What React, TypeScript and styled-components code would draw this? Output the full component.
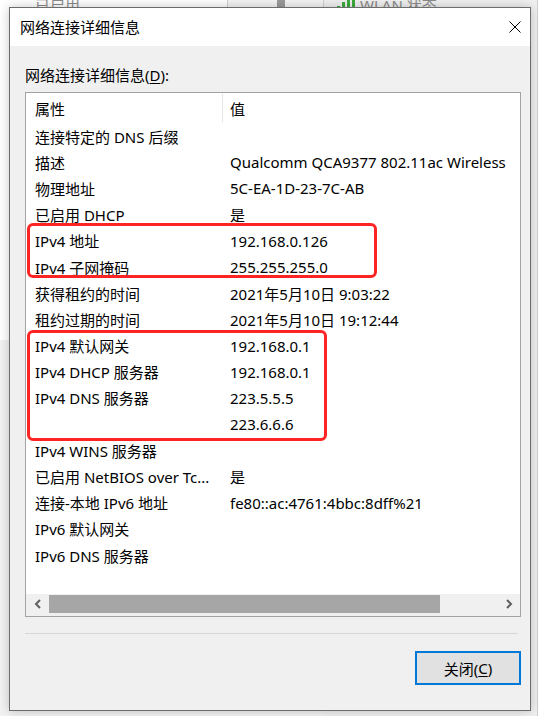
import React from "react";
import styled, { createGlobalStyle } from "styled-components";

const Global = createGlobalStyle`
  html, body { margin: 0; padding: 0; }
  body {
    width: 538px;
    height: 716px;
    overflow: hidden;
    background: #f2f2f2;
    font-family: "Noto Sans", "Noto Sans CJK SC", sans-serif;
    font-size: 15px;
    color: #000;
  }
  * { box-sizing: border-box; }
`;

const Desktop = styled.div`
  position: relative;
  width: 538px;
  height: 716px;
  padding: 7px 0 0 9px;
  overflow: hidden;
`;

/* background windows peeking out behind the dialog */
const BackWindow = styled.div<{ $left: number; $top: number; $w: number; $h: number; $bg: string }>`
  position: absolute;
  left: ${(p) => p.$left}px;
  top: ${(p) => p.$top}px;
  width: ${(p) => p.$w}px;
  height: ${(p) => p.$h}px;
  background: ${(p) => p.$bg};
  border-right: 1px solid #d0d0d0;
`;

const BackText = styled.span<{ $left: number; $top: number }>`
  position: absolute;
  left: ${(p) => p.$left}px;
  top: ${(p) => p.$top}px;
  color: #8a8a8a;
  font-size: 15px;
  line-height: 20px;
  white-space: nowrap;
`;

const BackBar = styled.div<{ $left: number; $w: number; $c: string }>`
  position: absolute;
  left: ${(p) => p.$left}px;
  top: 0;
  width: ${(p) => p.$w}px;
  height: 100%;
  background: ${(p) => p.$c};
`;

const Dialog = styled.div`
  position: relative;
  width: 522px;
  height: 704px;
  border: 1px solid #6c6c6c;
  background: #f0f0f0;
  box-shadow: 0 0 10px rgba(0, 0, 0, 0.22);
  display: flex;
  flex-direction: column;
`;

const TitleBar = styled.div`
  height: 38px;
  background: #fff;
  display: flex;
  align-items: center;
  justify-content: space-between;
  padding: 0 9px 0 10px;
  flex-shrink: 0;
`;

const Title = styled.span`
  font-size: 15px;
  line-height: 20px;
  color: #000;
`;

const CloseBtn = styled.div`
  width: 12px;
  height: 12px;
  display: flex;
`;

const Body = styled.div`
  flex: 1;
  display: flex;
  flex-direction: column;
  padding: 19px 9px 0 15px;
`;

const Label = styled.div`
  line-height: 20px;
  height: 20px;
  color: #000;
`;

const U = styled.span`
  text-decoration: underline;
  text-underline-offset: 2px;
`;

const ListBox = styled.div`
  position: relative;
  margin-top: 7px;
  height: 525px;
  border: 1px solid #a3a3a3;
  background: #fff;
  display: flex;
  flex-direction: column;
`;

const Header = styled.div`
  height: 30px;
  display: grid;
  grid-template-columns: 196px 1fr;
  flex-shrink: 0;
`;

const HeadCell = styled.div<{ $sep?: boolean }>`
  display: flex;
  align-items: center;
  padding-left: ${(p) => (p.$sep ? 7 : 9)}px;
  border-left: ${(p) => (p.$sep ? "1px solid #e5e5e5" : "none")};
  margin: 1px 0 1px;
`;

const Rows = styled.div`
  flex: 1;
  overflow: hidden;
  display: flex;
  flex-direction: column;
`;

const Row = styled.div`
  height: 26.2px;
  flex-shrink: 0;
  display: grid;
  grid-template-columns: 196px 1fr;
  align-items: center;
  white-space: nowrap;
`;

const Prop = styled.div`
  padding-left: 9px;
  overflow: hidden;
`;

const Val = styled.div`
  padding-left: 8px;
  overflow: hidden;
`;

const HScroll = styled.div`
  height: 22px;
  flex-shrink: 0;
  background: #f0f0f0;
  display: flex;
  align-items: flex-start;
  padding-top: 1px;
`;

const Arrow = styled.div`
  width: 23px;
  height: 18px;
  display: flex;
  align-items: center;
  justify-content: center;
  flex-shrink: 0;
`;

const Track = styled.div`
  flex: 1;
  height: 18px;
  display: flex;
`;

const Thumb = styled.div`
  height: 18px;
  background: #a6a6a6;
`;

const Mark = styled.div<{ $l: number; $t: number; $w: number; $h: number }>`
  position: absolute;
  left: ${(p) => p.$l}px;
  top: ${(p) => p.$t}px;
  width: ${(p) => p.$w}px;
  height: ${(p) => p.$h}px;
  border: 3px solid #ff2424;
  border-radius: 6px;
  pointer-events: none;
`;

const Separator = styled.div`
  margin-top: 16px;
  height: 1px;
  margin-right: 3px;
  background: #d6d6d6;
`;

const Button = styled.button`
  margin-top: 17px;
  align-self: flex-end;
  width: 106px;
  height: 34px;
  border: 2px solid #0078d7;
  background: #e1e1e1;
  font-family: "Noto Sans", "Noto Sans CJK SC", sans-serif;
  font-size: 15px;
  color: #000;
  padding: 0;
  display: flex;
  align-items: center;
  justify-content: center;
  cursor: default;
`;

const rows: [string, string][] = [
  ["连接特定的 DNS 后缀", ""],
  ["描述", "Qualcomm QCA9377 802.11ac Wireless"],
  ["物理地址", "5C-EA-1D-23-7C-AB"],
  ["已启用 DHCP", "是"],
  ["IPv4 地址", "192.168.0.126"],
  ["IPv4 子网掩码", "255.255.255.0"],
  ["获得租约的时间", "2021年5月10日 9:03:22"],
  ["租约过期的时间", "2021年5月10日 19:12:44"],
  ["IPv4 默认网关", "192.168.0.1"],
  ["IPv4 DHCP 服务器", "192.168.0.1"],
  ["IPv4 DNS 服务器", "223.5.5.5"],
  ["", "223.6.6.6"],
  ["IPv4 WINS 服务器", ""],
  ["已启用 NetBIOS over Tc...", "是"],
  ["连接-本地 IPv6 地址", "fe80::ac:4761:4bbc:8dff%21"],
  ["IPv6 默认网关", ""],
  ["IPv6 DNS 服务器", ""],
];

const Chevron = ({ dir }: { dir: "left" | "right" }) => (
  <svg width="8" height="10" viewBox="0 0 8 10">
    <polyline
      points={dir === "left" ? "6,1 2,5 6,9" : "2,1 6,5 2,9"}
      fill="none"
      stroke="#606060"
      strokeWidth="2"
    />
  </svg>
);

export default function App() {
  return (
    <>
      <Global />
      <Desktop>
        <BackWindow $left={0} $top={-60} $w={228} $h={400} $bg="#ffffff">
          <BackText $left={35} $top={55}>已启用</BackText>
        </BackWindow>
        <BackWindow $left={228} $top={-60} $w={96} $h={400} $bg="#f4f4f4">
          <BackBar $left={49} $w={8} $c="#9a9a9a" />
        </BackWindow>
        <BackWindow $left={324} $top={-60} $w={214} $h={800} $bg="#f0f0f0">
          <BackText $left={36} $top={55}>WLAN 状态</BackText>
          <svg
            style={{ position: "absolute", left: 11, top: 52 }}
            width="22"
            height="20"
            viewBox="0 0 22 20"
          >
            <rect x="2" y="14" width="3" height="6" fill="#3cab3c" />
            <rect x="7" y="10" width="3" height="10" fill="#3cab3c" />
            <rect x="12" y="6" width="3" height="14" fill="#3cab3c" />
            <rect x="17" y="2" width="3" height="18" fill="#3cab3c" />
          </svg>
        </BackWindow>
        <Dialog>
          <TitleBar>
            <Title>网络连接详细信息</Title>
            <CloseBtn>
              <svg width="12" height="12" viewBox="0 0 12 12">
                <path d="M0.5 0.5 L11.5 11.5 M11.5 0.5 L0.5 11.5" stroke="#000" strokeWidth="1" fill="none" />
              </svg>
            </CloseBtn>
          </TitleBar>
          <Body>
            <Label>
              网络连接详细信息(<U>D</U>):
            </Label>
            <ListBox>
              <Header>
                <HeadCell>属性</HeadCell>
                <HeadCell $sep>值</HeadCell>
              </Header>
              <Rows>
                {rows.map(([p, v], i) => (
                  <Row key={i}>
                    <Prop>{p}</Prop>
                    <Val>{v}</Val>
                  </Row>
                ))}
              </Rows>
              <HScroll>
                <Arrow>
                  <Chevron dir="left" />
                </Arrow>
                <Track>
                  <Thumb style={{ width: 391 }} />
                </Track>
                <Arrow>
                  <Chevron dir="right" />
                </Arrow>
              </HScroll>
              <Mark $l={1} $t={130} $w={350} $h={55} />
              <Mark $l={1} $t={237} $w={300} $h={111} />
            </ListBox>
            <Separator />
            <Button>
              关闭(<U>C</U>)
            </Button>
          </Body>
        </Dialog>
      </Desktop>
    </>
  );
}
